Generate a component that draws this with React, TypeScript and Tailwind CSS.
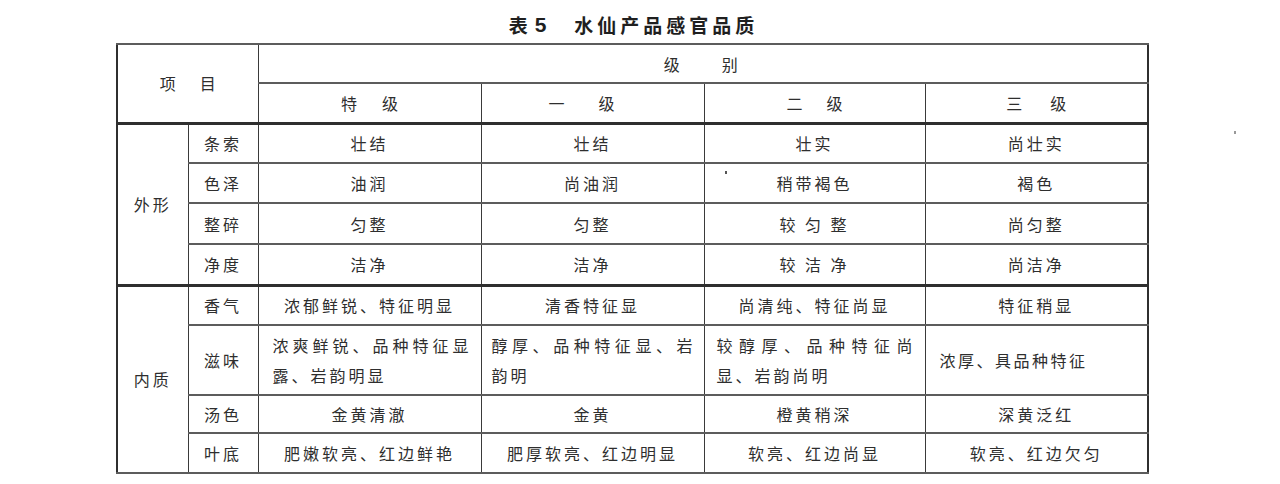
import React from 'react';

type Row = {
  group?: string;
  item: string;
  cells: (string | string[])[];
  h: string;
  groupTop?: boolean;
};

const rows: Row[] = [
  { group: '外形', item: '条索', cells: ['壮结', '壮结', '壮实', '尚壮实'], h: 'h-[40px]' },
  { item: '色泽', cells: ['油润', '尚油润', '稍带褐色', '褐色'], h: 'h-[40px]' },
  { item: '整碎', cells: ['匀整', '匀整', '较 匀 整', '尚匀整'], h: 'h-[41px]' },
  { item: '净度', cells: ['洁净', '洁净', '较 洁 净', '尚洁净'], h: 'h-[41px]' },
  { group: '内质', item: '香气', cells: ['浓郁鲜锐、特征明显', '清香特征显', '尚清纯、特征尚显', '特征稍显'], h: 'h-[40px]', groupTop: true },
  {
    item: '滋味',
    cells: [
      ['浓爽鲜锐、品种特征显', '露、岩韵明显'],
      ['醇厚、品种特征显、岩', '韵明'],
      ['较醇厚、品种特征尚', '显、岩韵尚明'],
      '浓厚、具品种特征',
    ],
    h: 'h-[70px]',
  },
  { item: '汤色', cells: ['金黄清澈', '金黄', '橙黄稍深', '深黄泛红'], h: 'h-[38px]' },
  { item: '叶底', cells: ['肥嫩软亮、红边鲜艳', '肥厚软亮、红边明显', '软亮、红边尚显', '软亮、红边欠匀'], h: 'h-[40px]' },
];

// padding for the wrapped (two-line) cells, per grade column
const wrapPad = ['pl-[14px] pr-[12px]', 'pl-[10px] pr-[11px]', 'pl-[12px] pr-[12px]', 'pl-[14px] pr-[12px]'];

const cell = 'border-x border-y-2 border-x-[#3a3a3a] border-y-[#5c5c5c] p-0 text-center align-middle';

const App: React.FC = () => {
  return (
    <div
      className="relative w-[1280px] h-[484px] bg-white text-[#2e2e2e] overflow-hidden"
      style={{ fontFamily: '"Noto Sans CJK SC", "Noto Sans", sans-serif' }}
    >
      <div className="pl-[116px]">
        {/* Title */}
        <div className="w-[1031px] h-[43px] pt-[7px] flex items-center justify-center font-bold text-[#1f1f1f]">
          <div className="flex items-center h-[24px] ml-[4px]">
            <span className="text-[19px] leading-[24px]">表</span>
            <span className="ml-[7px] text-[21px] leading-[24px] font-['Liberation_Sans',sans-serif]">5</span>
            <span className="ml-[28px] text-[19px] leading-[24px] tracking-[4px]">水仙产品感官品质</span>
          </div>
        </div>

        <table className="table-fixed border-collapse border-2 border-[#2f2f2f] text-[16px] tracking-[3px]">
          <colgroup>
            <col className="w-[71px]" />
            <col className="w-[70px]" />
            <col className="w-[223px]" />
            <col className="w-[223px]" />
            <col className="w-[221px]" />
            <col className="w-[223px]" />
          </colgroup>
          <thead>
            <tr className="h-[39px]">
              <td colSpan={2} rowSpan={2} className={`${cell} border-b-[3px] border-b-[#2f2f2f]`}>
                <div className="flex justify-center gap-[24px] tracking-normal">
                  <span>项</span>
                  <span>目</span>
                </div>
              </td>
              <td colSpan={4} className={cell}>
                <div className="flex justify-center gap-[42px] tracking-normal pr-[4px]">
                  <span>级</span>
                  <span>别</span>
                </div>
              </td>
            </tr>
            <tr className="h-[40px]">
              {[
                ['特', '级', 'gap-[25px]'],
                ['一', '级', 'gap-[34px] pr-[22px]'],
                ['二', '级', 'gap-[24px]'],
                ['三', '级', 'gap-[28px]'],
              ].map(([a, b, g]) => (
                <td key={a} className={`${cell} border-b-[3px] border-b-[#2f2f2f]`}>
                  <div className={`flex justify-center tracking-normal ${g}`}>
                    <span>{a}</span>
                    <span>{b}</span>
                  </div>
                </td>
              ))}
            </tr>
          </thead>
          <tbody>
            {rows.map((row) => (
              <tr key={row.item} className={row.h}>
                {row.group && (
                  <td rowSpan={4} className={`${cell} ${row.groupTop ? 'border-t-[3px] border-t-[#2f2f2f]' : ''}`}>
                    {row.group}
                  </td>
                )}
                <td className={`${cell} ${row.groupTop ? 'border-t-[3px] border-t-[#2f2f2f]' : ''}`}>{row.item}</td>
                {row.cells.map((c, i) => (
                  <td
                    key={i}
                    className={`${cell} relative ${row.groupTop ? 'border-t-[3px] border-t-[#2f2f2f]' : ''}`}
                  >
                    {Array.isArray(c) ? (
                      <div className={`${wrapPad[i]} leading-[30px] tracking-normal text-left`}>
                        <div className="text-justify [text-align-last:justify]">{c[0]}</div>
                        <div className="tracking-[3px]">{c[1]}</div>
                      </div>
                    ) : row.item === '滋味' ? (
                      <div className={`${wrapPad[i]} text-left tracking-[2.5px]`}>{c}</div>
                    ) : (
                      <span>{c}</span>
                    )}
                    {row.item === '色泽' && i === 2 && (
                      <span className="absolute left-[20px] top-[7px] w-[2px] h-[3px] bg-[#555]" />
                    )}
                  </td>
                ))}
              </tr>
            ))}
          </tbody>
        </table>
      </div>

      {/* scan speck */}
      <span className="absolute left-[1234px] top-[131px] w-[2px] h-[3px] bg-[#999]" />
    </div>
  );
};

export default App;
